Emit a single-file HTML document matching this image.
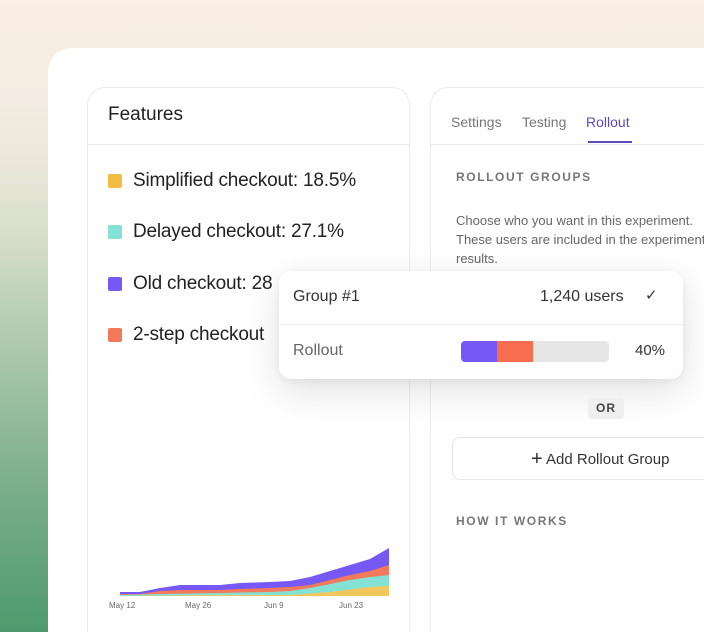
<!DOCTYPE html>
<html><head><style>
*{margin:0;padding:0;box-sizing:border-box}
html,body{width:704px;height:632px;overflow:hidden}
body{font-family:"Liberation Sans",sans-serif;background:#fff}
.wrap{position:absolute;left:0;top:0;width:704px;height:632px;overflow:hidden;
background:linear-gradient(180deg,#fbeee4 0%,#f4ece2 15%,rgba(244,236,226,0) 45%),linear-gradient(180deg,#efe9dd 0%,#c4d5bd 45%,#7fb08e 75%,#4e9a6e 100%);}
.main{position:absolute;left:48px;top:48px;width:656px;height:584px;background:#fff;border-radius:24px 0 0 0}
.card{position:absolute;background:#fff;border:1px solid #ececec;border-bottom:none;border-radius:18px 18px 0 0}
.l{left:87px;top:87px;width:323px;height:545px}
.r{left:430px;top:87px;width:274px;height:545px;border-right:none;border-radius:18px 0 0 0}
.hd{position:absolute;left:0;right:0;top:56px;border-top:1px solid #ececec}
.t{position:absolute;white-space:nowrap}
.sq{position:absolute;left:108px;width:14px;height:14px;border-radius:2px}
.it{font-size:19px;color:#222;left:133px;letter-spacing:-0.2px}
.cap{font-size:12px;letter-spacing:1.6px;color:#777;font-weight:bold}
.pop{position:absolute;left:279px;top:271px;width:404px;height:108px;background:#fff;border-radius:12px;box-shadow:0 12px 40px rgba(0,0,0,.12),0 2px 8px rgba(0,0,0,.06)}
</style></head><body><div class="wrap">
<div class="main"></div>
<div class="card l"><div class="hd"></div></div>
<div class="card r"><div class="hd"></div></div>
<div class="t" style="left:108px;top:104px;font-size:19px;color:#222">Features</div>
<div class="sq" style="top:174px;background:#f4bd42"></div>
<div class="t it" style="top:170px">Simplified checkout: 18.5%</div>
<div class="sq" style="top:225px;background:#83e2d5"></div>
<div class="t it" style="top:221px">Delayed checkout: 27.1%</div>
<div class="sq" style="top:277px;background:#7658f4"></div>
<div class="t it" style="top:273px">Old checkout: 28</div>
<div class="sq" style="top:328px;background:#f4785a"></div>
<div class="t it" style="top:324px">2-step checkout</div>
<svg style="position:absolute;left:100px;top:540px" width="300" height="75">
<path d="M20 52 L40 52 L60 48 L80 45 L120 45 L140 43 L170 42 L190 41 L210 37 L230 31 L250 25 L270 19 L289 8 L289 56 L20 56Z" fill="#7658f4"/>
<path d="M20 54 L40 54 L60 51 L80 50 L120 50 L140 49 L170 48 L190 47 L210 45 L230 40 L250 35 L270 31 L289 25 L289 56 L20 56Z" fill="#f4785a"/>
<path d="M20 55 L60 54 L120 53 L170 52 L190 51 L210 48 L230 44 L250 40 L270 37 L289 35 L289 56 L20 56Z" fill="#83e2d5"/>
<path d="M20 56 L120 55 L190 55 L230 52 L270 47 L289 46 L289 56Z" fill="#f4c65e"/>
<text x="9" y="68" font-size="8" fill="#666" font-family="Liberation Sans">May 12</text>
<text x="85" y="68" font-size="8" fill="#666" font-family="Liberation Sans">May 26</text>
<text x="164" y="68" font-size="8" fill="#666" font-family="Liberation Sans">Jun 9</text>
<text x="239" y="68" font-size="8" fill="#666" font-family="Liberation Sans">Jun 23</text>
</svg>
<div class="t" style="left:451px;top:114px;font-size:14px;color:#777">Settings</div>
<div class="t" style="left:522px;top:114px;font-size:14px;color:#777">Testing</div>
<div class="t" style="left:586px;top:114px;font-size:14px;color:#5b4ac4">Rollout</div>
<div style="position:absolute;left:588px;top:141px;width:44px;height:2px;background:#5b4ac4"></div>
<div class="t cap" style="left:456px;top:170px">ROLLOUT GROUPS</div>
<div class="t" style="left:456px;top:211px;font-size:13px;line-height:19px;color:#666">Choose who you want in this experiment.<br>These users are included in the experiment<br>results.</div>
<div class="pop">
<div style="position:absolute;left:0;right:0;top:53px;border-top:1px solid #eee"></div>
<div class="t" style="left:14px;top:17px;font-size:16px;color:#333">Group #1</div>
<div class="t" style="left:261px;top:17px;font-size:16px;color:#333">1,240 users</div>
<div class="t" style="left:366px;top:15px;font-size:15px;color:#333">✓</div>
<div class="t" style="left:14px;top:71px;font-size:16px;color:#666">Rollout</div>
<div style="position:absolute;left:182px;top:70px;width:148px;height:21px;border-radius:4px;background:#e6e6e6;overflow:hidden">
<div style="position:absolute;left:0;top:0;width:36px;height:21px;background:#7658f4"></div>
<div style="position:absolute;left:36px;top:0;width:36px;height:21px;background:#f86c4f"></div></div>
<div class="t" style="left:356px;top:71px;font-size:15px;color:#333">40%</div>
</div>
<div class="t" style="left:588px;top:398px;width:36px;height:21px;background:#efefef;border-radius:3px;font-size:12px;font-weight:bold;letter-spacing:1px;color:#444;text-align:center;line-height:21px">OR</div>
<div style="position:absolute;left:452px;top:437px;width:252px;height:43px;border:1px solid #e6e6e6;border-right:none;border-radius:8px 0 0 8px"></div>
<div class="t" style="left:531px;top:447px;font-size:15px;color:#333"><span style="font-size:20px;position:relative;top:1px">+</span> Add Rollout Group</div>
<div class="t cap" style="left:456px;top:514px">HOW IT WORKS</div>
</div></body></html>
